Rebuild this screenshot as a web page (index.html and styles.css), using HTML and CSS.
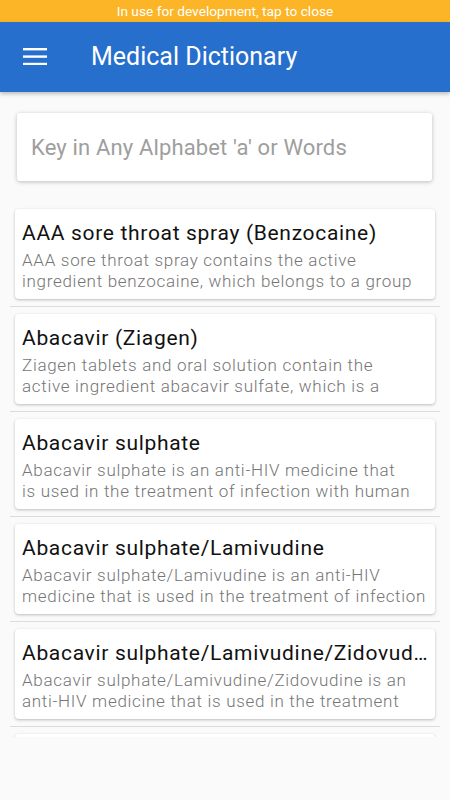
FILE: index.html
```html
<!DOCTYPE html>
<html lang="en">
<head>
    <meta charset="UTF-8">
    <meta name="viewport" content="width=device-width, initial-scale=1.0">
    <title>Medical Dictionary</title>
    <link rel="stylesheet" href="styles.css">
</head>
<body>
    <div class="dev-banner">In use for development, tap to close</div>
    <header class="app-bar">
        <button class="menu-btn" aria-label="Menu">
            <svg width="24" height="18" viewBox="0 0 24 18">
                <rect x="0" y="1" width="24" height="2.4" fill="#fff"/>
                <rect x="0" y="8.4" width="24" height="2.4" fill="#fff"/>
                <rect x="0" y="15.8" width="24" height="2.4" fill="#fff"/>
            </svg>
        </button>
        <h1>Medical Dictionary</h1>
    </header>

    <div class="search-wrap">
        <input class="search" type="text" placeholder="Key in Any Alphabet 'a' or Words">
    </div>

    <div class="list">
        <div class="item">
            <div class="card">
                <div class="title">AAA sore throat spray (Benzocaine)</div>
                <div class="desc">AAA sore throat spray contains the active<br>ingredient benzocaine, which belongs to a group of medicines called local anaesthetics.</div>
            </div>
        </div>
        <div class="item">
            <div class="card">
                <div class="title">Abacavir (Ziagen)</div>
                <div class="desc">Ziagen tablets and oral solution contain the<br>active ingredient abacavir sulfate, which is a<br>type of medicine called a nucleoside reverse transcriptase inhibitor.</div>
            </div>
        </div>
        <div class="item">
            <div class="card">
                <div class="title">Abacavir sulphate</div>
                <div class="desc">Abacavir sulphate is an anti-HIV medicine that<br>is used in the treatment of infection with human immunodeficiency virus.</div>
            </div>
        </div>
        <div class="item">
            <div class="card">
                <div class="title">Abacavir sulphate/Lamivudine</div>
                <div class="desc">Abacavir sulphate/Lamivudine is an anti-HIV<br>medicine that is used in the treatment of infection with human immunodeficiency virus.</div>
            </div>
        </div>
        <div class="item">
            <div class="card">
                <div class="title">Abacavir sulphate/Lamivudine/Zidovudine</div>
                <div class="desc">Abacavir sulphate/Lamivudine/Zidovudine is an<br>anti-HIV medicine that is used in the treatment<br>of infection with human immunodeficiency virus.</div>
            </div>
        </div>
        <div class="item">
            <div class="card">
                <div class="title">Abatacept (Orencia)</div>
                <div class="desc">Orencia contains the active ingredient abatacept, which is a type of medicine called an immunosuppressant.</div>
            </div>
        </div>
    </div>
</body>
</html>
```

FILE: styles.css
```css
body {
    margin: 0;
    padding: 0;
    background-color: #fafafa;
    font-family: Roboto, "Noto Sans", sans-serif;
    overflow: hidden;
}

.dev-banner {
    height: 22px;
    line-height: 23px;
    background-color: #fbb526;
    color: #fff;
    font-size: 13.7px;
    text-align: center;
}

.app-bar {
    height: 70px;
    background-color: #276fcc;
    display: flex;
    align-items: center;
    box-shadow: 0 2px 4px rgba(0, 0, 0, 0.25);
    position: relative;
}

.menu-btn {
    background: none;
    border: none;
    padding: 0;
    margin-left: 23px;
    width: 24px;
    height: 18px;
    display: flex;
    margin-top: -2px;
}

.app-bar h1 {
    margin: 0 0 0 44px;
    color: #fff;
    font-size: 25px;
    font-weight: 400;
    margin-top: -2px;
}

.search-wrap {
    padding: 21px 18px 0 17px;
}

.search {
    display: block;
    width: 100%;
    height: 68px;
    box-sizing: border-box;
    border: none;
    border-radius: 3px;
    background: #fff;
    box-shadow: 0 1px 4px rgba(0, 0, 0, 0.25);
    padding: 0 14px;
    font-family: Roboto, sans-serif;
    font-size: 22px;
    letter-spacing: 0.15px;
    outline: none;
}

.search::placeholder {
    color: #9e9e9e;
}

.list {
    margin-top: 21px;
    padding: 0 10px;
    height: 535px;
    overflow: hidden;
}

.item {
    padding: 7px 5px;
    border-bottom: 1px solid #dcdcdc;
}

.card {
    height: 90px;
    box-sizing: border-box;
    background: #fff;
    border-radius: 4px;
    box-shadow: 0 1px 3px rgba(0, 0, 0, 0.25);
    padding: 10px 7px 0 7px;
}

.title {
    font-size: 21px;
    line-height: 28px;
    letter-spacing: 0.68px;
    color: #111;
    white-space: nowrap;
    overflow: hidden;
    text-overflow: ellipsis;
}

.desc {
    margin-top: 3px;
    font-size: 17px;
    font-weight: 300;
    line-height: 21px;
    letter-spacing: 0.7px;
    color: #757575;
    height: 42px;
    overflow: hidden;
}
```
